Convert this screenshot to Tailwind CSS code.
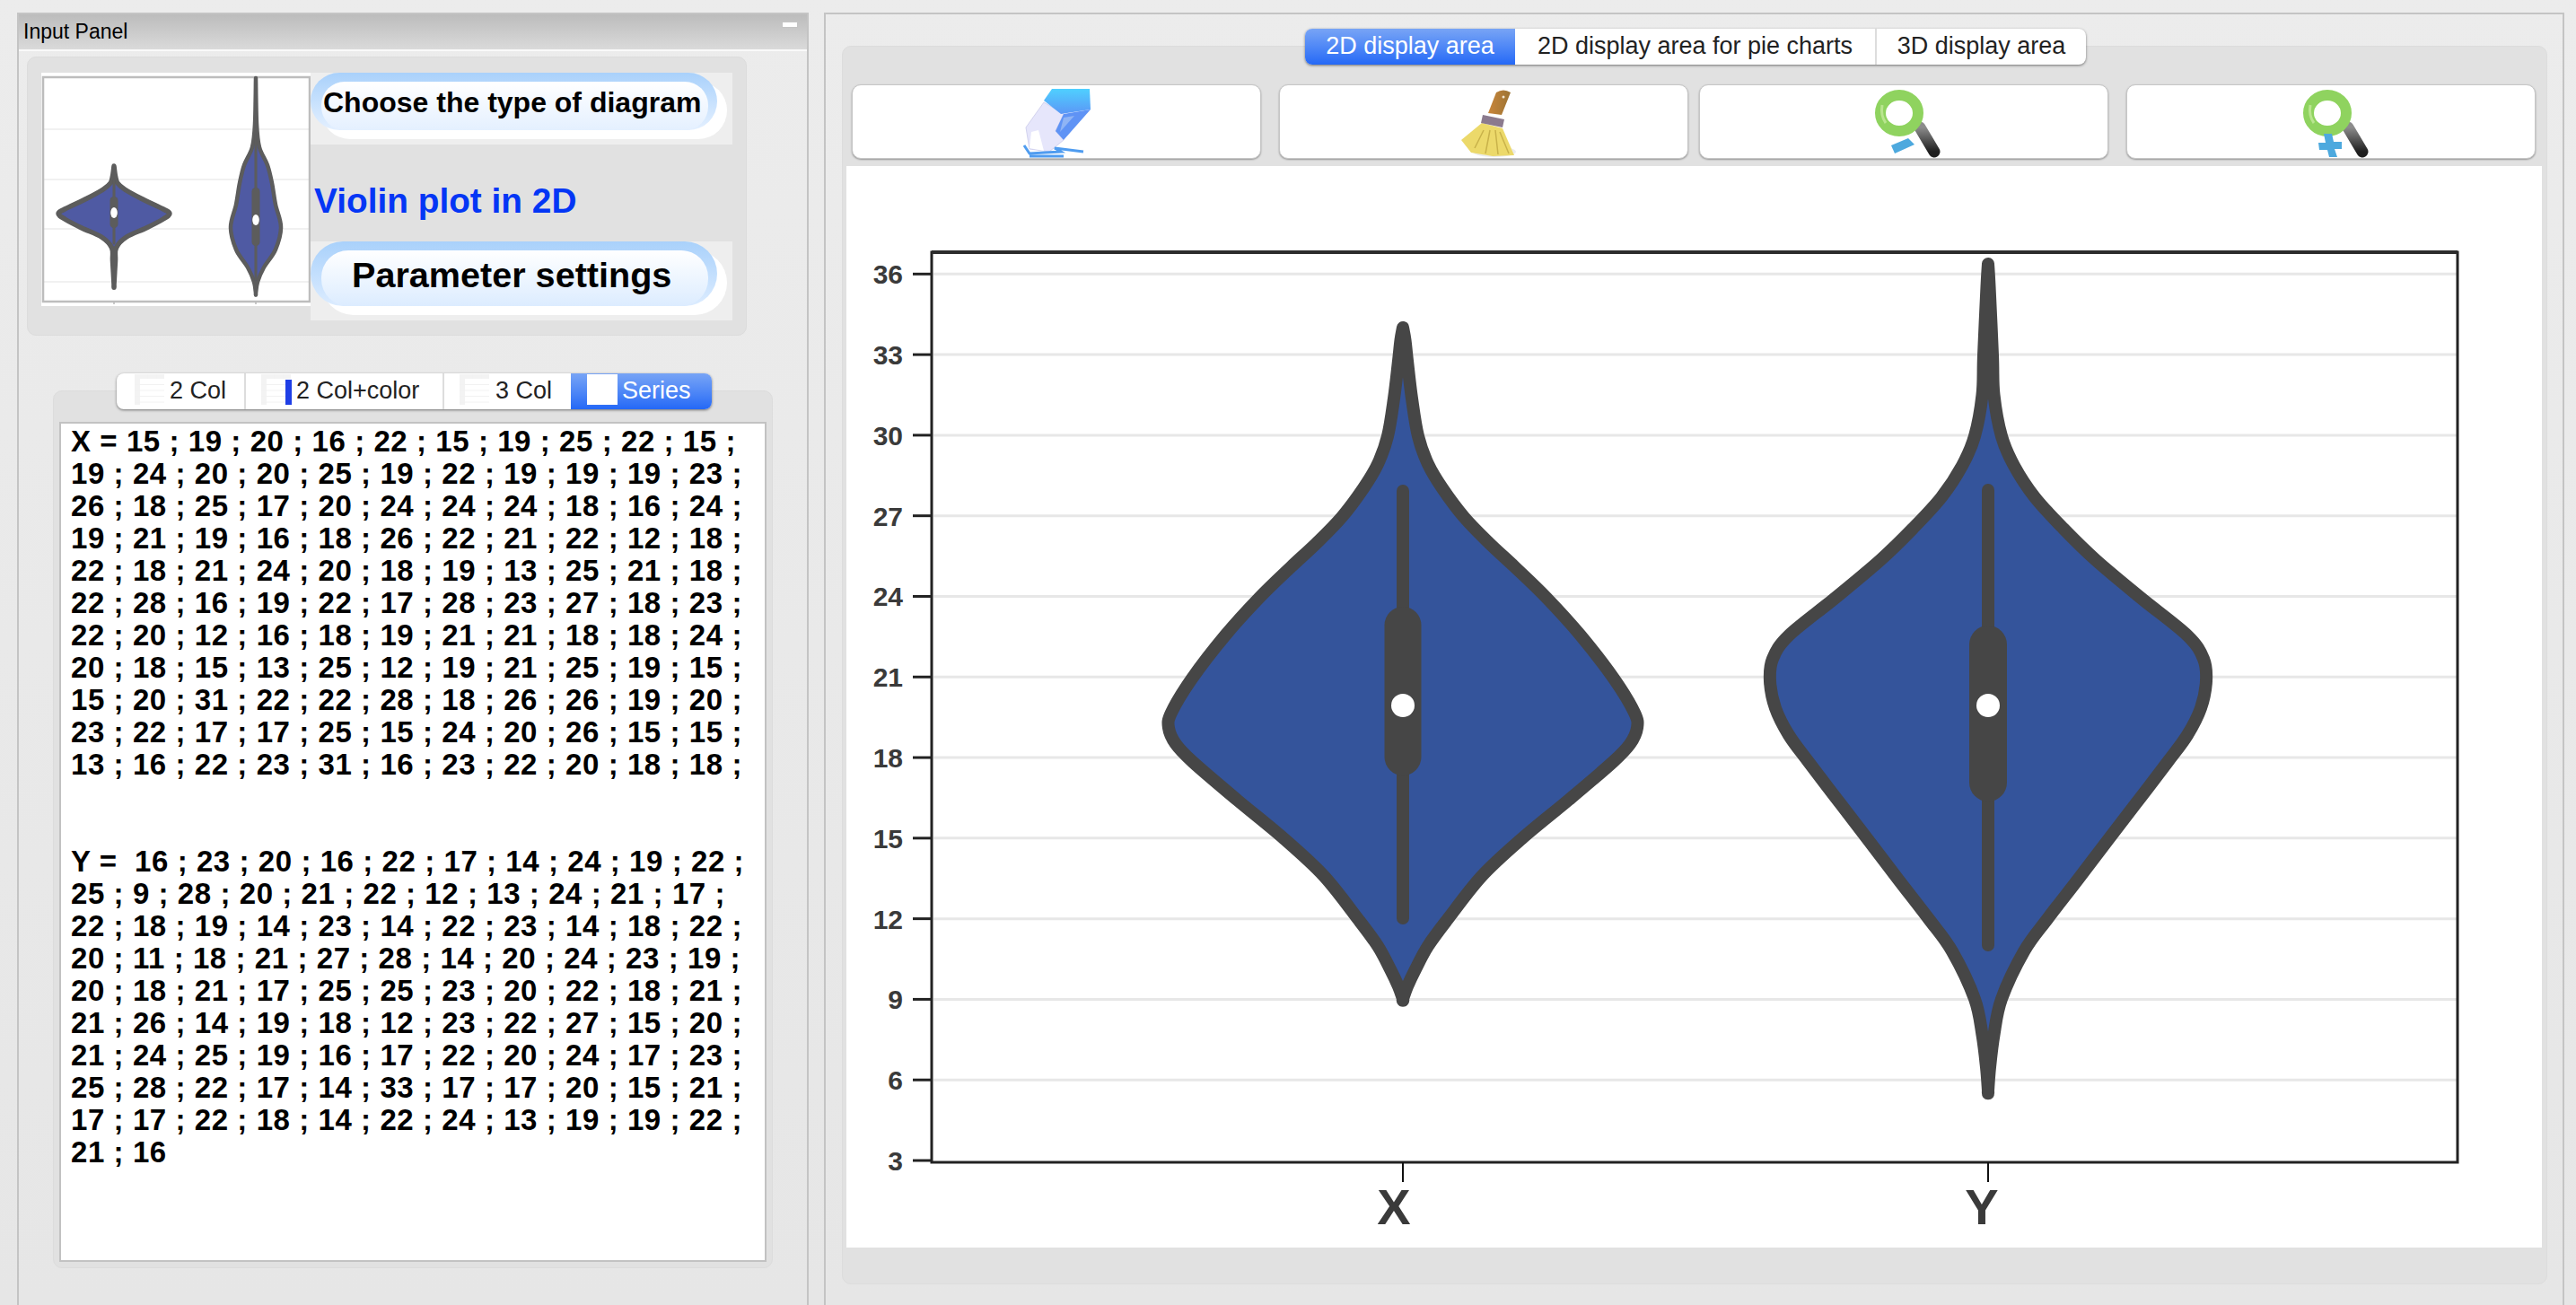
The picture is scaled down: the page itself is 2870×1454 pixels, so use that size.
<!DOCTYPE html>
<html lang="en">
  <head>
    <meta charset="UTF-8" />
    <title>Input Panel</title>
    <script src="https://cdn.jsdelivr.net/npm/@tailwindcss/browser@4"></script>
  </head>
  <body class="m-0 overflow-hidden bg-[#ebebeb] font-['Liberation_Sans',Arial,sans-serif]">
    <div class="flex h-[1454px] w-[2870px] items-start bg-gradient-to-b from-[#ececec] to-[#e6e6e6] pt-[14px]">
      <!-- Input panel -->
      <div class="ml-[19px] h-[1440px] w-[882px] border-x-2 border-t-2 border-[#c4c4c4]">
        <div class="relative h-[39px] bg-gradient-to-b from-[#bcbcbc] to-[#dadada] pl-[5px] text-[23px] leading-[38px] text-black">
          Input Panel
          <div class="absolute top-[8px] right-[10px] h-[7px] w-[18px] border border-[#c4c4c4] bg-white"></div>
        </div>
        <div class="h-[2px] bg-white/70"></div>

        <!-- diagram chooser -->
        <div class="mt-[6px] ml-[9px] flex h-[311px] w-[802px] items-start rounded-[10px] border border-[#dcdcdc] bg-[#e1e1e1] pt-[17px] pl-[15px]">
          <svg class="block bg-white" width="300" height="260" viewBox="46 80 300 260">
            <defs><filter id="soft"><feGaussianBlur stdDeviation="0.6" /></filter></defs>
            <g stroke="#f1f1f1" stroke-width="2">
              <path d="M48 143H345M48 199H345M48 254H345M48 313H345" />
            </g>
            <rect x="48" y="85" width="297" height="250" fill="none" stroke="#bdbdbd" stroke-width="2.5" />
            <path d="M127 335v3M285 335v3" stroke="#b9b9b9" stroke-width="1.5" />
            <g id="thumbViolins" filter="url(#soft)"></g>
          </svg>
          <div class="flex h-[276px] w-[470px] flex-col">
            <div class="relative h-[80px] bg-[#eeeeee]">
              <div class="absolute top-[10px] left-[12px] h-[64px] w-[452px] rounded-full bg-white"></div>
              <div class="absolute top-0 left-0 h-[64px] w-[453px] rounded-[32px] bg-gradient-to-b from-[#a9d1fb] to-[#e4f0ff]"></div>
              <div class="absolute top-[10px] left-[12px] h-[54px] w-[431px] rounded-[26px] bg-gradient-to-b from-white to-[#e4f0ff]"></div>
              <div class="absolute top-[10px] left-[14px] text-[32px] leading-[46px] font-bold whitespace-nowrap text-black">Choose the type of diagram</div>
            </div>
            <div class="flex flex-1 items-center pt-[18px] pl-[4px] text-[38.8px] font-bold text-[#0436f5]">Violin plot in 2D</div>
            <div class="relative h-[88px] bg-[#eeeeee]">
              <div class="absolute top-[10px] left-[12px] h-[72px] w-[452px] rounded-full bg-white"></div>
              <div class="absolute top-0 left-0 h-[72px] w-[453px] rounded-[36px] bg-gradient-to-b from-[#a9d1fb] to-[#dcecff]"></div>
              <div class="absolute top-[10px] left-[12px] h-[62px] w-[431px] rounded-[30px] bg-gradient-to-b from-white to-[#dcecff]"></div>
              <div class="absolute top-[12px] left-[46px] text-[39.6px] leading-[50px] font-bold whitespace-nowrap text-black">Parameter settings</div>
            </div>
          </div>
        </div>

        <!-- data entry -->
        <div class="mt-[61px] ml-[38px] h-[978px] w-[802px] rounded-[10px] border border-[#dcdcdc] bg-[#e1e1e1]">
          <div class="-mt-[20px] ml-[70px] flex h-[40px] w-[663px] overflow-hidden rounded-[8px] bg-white text-[27px] leading-[39px] text-[#222222] shadow-[0_1px_3px_rgba(0,0,0,0.5)]">
            <div class="flex w-[144px] border-r-2 border-[#dddddd] pl-[20px]">
              <svg class="mt-[1px] shrink-0" width="33" height="34"><use href="#sheet" /></svg>
              <span class="ml-[6px]">2 Col</span>
            </div>
            <div class="flex w-[221px] border-r-2 border-[#dddddd] pl-[17px]">
              <svg class="mt-[1px] shrink-0" width="34" height="34"><use href="#sheet" /><rect x="27" y="6" width="7" height="28" fill="#1f3fe6" /></svg>
              <span class="ml-[5px]">2 Col+color</span>
            </div>
            <div class="flex w-[141px] pl-[17px]">
              <svg class="mt-[1px] shrink-0" width="33" height="34"><use href="#sheet" /></svg>
              <span class="ml-[7px]">3 Col</span>
            </div>
            <div class="flex w-[157px] bg-gradient-to-b from-[#78a4f5] to-[#2468f6] pl-[18px] text-white">
              <div class="mt-[1px] h-[34px] w-[34px] bg-white"></div>
              <span class="ml-[5px]">Series</span>
            </div>
          </div>
          <div class="mt-[14px] ml-[6px] h-[936px] w-[788px] border-2 border-[#c2c2c2] bg-white pt-[2px] pl-[11px] text-[33px] leading-[36px] font-bold tracking-[0.57px] whitespace-pre text-black">X = 15 ; 19 ; 20 ; 16 ; 22 ; 15 ; 19 ; 25 ; 22 ; 15 ;
19 ; 24 ; 20 ; 20 ; 25 ; 19 ; 22 ; 19 ; 19 ; 19 ; 23 ;
26 ; 18 ; 25 ; 17 ; 20 ; 24 ; 24 ; 24 ; 18 ; 16 ; 24 ;
19 ; 21 ; 19 ; 16 ; 18 ; 26 ; 22 ; 21 ; 22 ; 12 ; 18 ;
22 ; 18 ; 21 ; 24 ; 20 ; 18 ; 19 ; 13 ; 25 ; 21 ; 18 ;
22 ; 28 ; 16 ; 19 ; 22 ; 17 ; 28 ; 23 ; 27 ; 18 ; 23 ;
22 ; 20 ; 12 ; 16 ; 18 ; 19 ; 21 ; 21 ; 18 ; 18 ; 24 ;
20 ; 18 ; 15 ; 13 ; 25 ; 12 ; 19 ; 21 ; 25 ; 19 ; 15 ;
15 ; 20 ; 31 ; 22 ; 22 ; 28 ; 18 ; 26 ; 26 ; 19 ; 20 ;
23 ; 22 ; 17 ; 17 ; 25 ; 15 ; 24 ; 20 ; 26 ; 15 ; 15 ;
13 ; 16 ; 22 ; 23 ; 31 ; 16 ; 23 ; 22 ; 20 ; 18 ; 18 ;


Y =  16 ; 23 ; 20 ; 16 ; 22 ; 17 ; 14 ; 24 ; 19 ; 22 ;
25 ; 9 ; 28 ; 20 ; 21 ; 22 ; 12 ; 13 ; 24 ; 21 ; 17 ;
22 ; 18 ; 19 ; 14 ; 23 ; 14 ; 22 ; 23 ; 14 ; 18 ; 22 ;
20 ; 11 ; 18 ; 21 ; 27 ; 28 ; 14 ; 20 ; 24 ; 23 ; 19 ;
20 ; 18 ; 21 ; 17 ; 25 ; 25 ; 23 ; 20 ; 22 ; 18 ; 21 ;
21 ; 26 ; 14 ; 19 ; 18 ; 12 ; 23 ; 22 ; 27 ; 15 ; 20 ;
21 ; 24 ; 25 ; 19 ; 16 ; 17 ; 22 ; 20 ; 24 ; 17 ; 23 ;
25 ; 28 ; 22 ; 17 ; 14 ; 33 ; 17 ; 17 ; 20 ; 15 ; 21 ;
17 ; 17 ; 22 ; 18 ; 14 ; 22 ; 24 ; 13 ; 19 ; 19 ; 22 ;
21 ; 16</div>
        </div>
      </div>

      <!-- Display panel -->
      <div class="ml-[17px] h-[1440px] w-[1939px] border-x-2 border-t-2 border-[#c4c4c4] pt-[35px] pl-[18px]">
        <div class="h-[1380px] w-[1900px] rounded-[10px] border border-[#dcdcdc] bg-[#e1e1e1]">
          <div class="-mt-[20px] ml-[515px] flex h-[40px] w-[870px] overflow-hidden rounded-[8px] bg-white text-center text-[27px] leading-[39px] text-[#222222] shadow-[0_1px_3px_rgba(0,0,0,0.5)]">
            <div class="w-[234px] bg-gradient-to-b from-[#78a4f5] to-[#2468f6] text-white">2D display area</div>
            <div class="w-[403px] border-r-2 border-[#dddddd]">2D display area for pie charts</div>
            <div class="w-[233px]">3D display area</div>
          </div>

          <div class="mt-[22px] ml-[10px] flex gap-[20px]">
            <div class="flex h-[83px] w-[456px] justify-center rounded-[10px] border border-[#c6c6c6] bg-white shadow-[0_1px_2px_rgba(0,0,0,0.35)]">
              <svg width="80" height="83" viewBox="0 0 80 83">
                <defs>
                  <linearGradient id="cap" x1="0" y1="0" x2="0" y2="1"><stop offset="0" stop-color="#4fd0ff" /><stop offset="1" stop-color="#5b97f6" /></linearGradient>
                  <linearGradient id="stick" x1="0" y1="0" x2="1" y2="0"><stop offset="0" stop-color="#c9853a" /><stop offset="1" stop-color="#9c7434" /></linearGradient>
                  <linearGradient id="grip" x1="0" y1="0" x2="0" y2="1"><stop offset="0" stop-color="#8c8c8c" /><stop offset="1" stop-color="#1f1f1f" /></linearGradient>
                </defs>
                <path d="M26 19L48 32L39 51L48 61L32 74L10 71L6 47Z" fill="#e6e6fb" stroke="#d2d2ee" />
                <path d="M10 70L26 73L20 50L12 52Z" fill="#ffffff" />
                <path d="M26 17L35 4H77L78 27L45 32Z" fill="url(#cap)" />
                <path d="M48 32L78 27L48 61L39 51Z" fill="#5f93f5" />
                <path d="M48 36L60 34L44 52Z" fill="#8fb4f5" />
                <path d="M4 67L10 76L45 74L38 70L70 74M10 79H48" fill="none" stroke="#4f9cf0" stroke-width="3" />
              </svg>
            </div>
            <div class="flex h-[83px] w-[456px] justify-center rounded-[10px] border border-[#c6c6c6] bg-white shadow-[0_1px_2px_rgba(0,0,0,0.35)]">
              <svg width="80" height="83" viewBox="0 0 80 83">
                <ellipse cx="52" cy="74" rx="24" ry="6" fill="#ececec" />
                <path d="M54 8Q62 3 70 8L60 33L45 31Z" fill="url(#stick)" />
                <circle cx="62" cy="13" r="1.5" fill="#f3e7d0" />
                <path d="M38 42L61 48L74 78L50 79L26 75L15 61Z" fill="#ecd96a" />
                <path d="M40 50L30 70M47 50L42 76M53 50L56 77M58 52L68 76" stroke="#c9b24a" stroke-width="1.5" fill="none" />
                <path d="M39 33L63 38L61 47L37 42Z" fill="#8b7a8e" />
              </svg>
            </div>
            <div class="-ml-[8px] flex h-[83px] w-[456px] justify-center rounded-[10px] border border-[#c6c6c6] bg-white shadow-[0_1px_2px_rgba(0,0,0,0.35)]">
              <svg class="ml-[4px]" width="80" height="83" viewBox="0 0 80 83">
                <path d="M56 47L72 74" stroke="url(#grip)" stroke-width="13" stroke-linecap="round" />
                <ellipse cx="33" cy="31" rx="21" ry="20" fill="none" stroke="#8fd35f" stroke-width="12" />
                <path d="M14 22Q12 34 18 42" fill="none" stroke="#b9e58f" stroke-width="3" />
                <path d="M24 67L43 59L50 66L28 76Z" fill="#4da9de" />
              </svg>
            </div>
            <div class="flex h-[83px] w-[456px] justify-center rounded-[10px] border border-[#c6c6c6] bg-white shadow-[0_1px_2px_rgba(0,0,0,0.35)]">
              <svg class="ml-[6px]" width="80" height="83" viewBox="0 0 80 83">
                <path d="M56 47L72 74" stroke="url(#grip)" stroke-width="13" stroke-linecap="round" />
                <ellipse cx="33" cy="31" rx="21" ry="20" fill="none" stroke="#8fd35f" stroke-width="12" />
                <path d="M14 22Q12 34 18 42" fill="none" stroke="#b9e58f" stroke-width="3" />
                <path d="M29 54H38L40 63H49V71H41L44 80H35L33 72H24L23 64H31Z" fill="#4da9de" />
              </svg>
            </div>
          </div>

          <!-- plot -->
          <svg class="mt-[8px] ml-[4px] block bg-white" width="1889" height="1205" viewBox="943 186 1889 1205" font-family="Liberation Sans, Arial, sans-serif">
            <g id="grid"></g>
            <g id="violins"></g>
            <path d="M1038 282H2738V1296H1038Z" fill="none" stroke="#222222" stroke-width="3" />
            <path d="M1038 282H2738" stroke="#2c2c2c" stroke-width="4" />
            <path d="M1563 1296V1318M2215 1296V1318" stroke="#111111" stroke-width="2" />
            <text x="1553" y="1365" font-size="56" font-weight="700" fill="#3a3a3a" text-anchor="middle">X</text>
            <text x="2208" y="1365" font-size="56" font-weight="700" fill="#3a3a3a" text-anchor="middle">Y</text>
          </svg>
        </div>
      </div>
    </div>

    <svg width="0" height="0" class="absolute">
      <defs>
        <g id="sheet">
          <rect width="33" height="34" fill="#ffffff" />
          <rect width="33" height="5" fill="#f3f3f3" />
          <rect width="6" height="34" fill="#f3f3f3" />
          <path d="M0 11.5H33M0 18H33M0 24.5H33M0 31H33M14 0V5M24 0V5" stroke="#f2f2f2" stroke-width="1" />
        </g>
      </defs>
    </svg>

    <script>
      const NS = "http://www.w3.org/2000/svg";

      function el(parent, name, attrs) {
        const node = document.createElementNS(NS, name);
        for (const key in attrs) node.setAttribute(key, attrs[key]);
        parent.appendChild(node);
        return node;
      }

      // catmull-rom through the outline points
      function smooth(pts) {
        let d = "M" + pts[0].join(" ");
        for (let i = 0; i < pts.length - 1; i++) {
          const p0 = pts[Math.max(i - 1, 0)];
          const p1 = pts[i];
          const p2 = pts[i + 1];
          const p3 = pts[Math.min(i + 2, pts.length - 1)];
          d += " C" + (p1[0] + (p2[0] - p0[0]) / 6) + " " + (p1[1] + (p2[1] - p0[1]) / 6) + " " +
            (p2[0] - (p3[0] - p1[0]) / 6) + " " + (p2[1] - (p3[1] - p1[1]) / 6) + " " + p2[0] + " " + p2[1];
        }
        return d + "Z";
      }

      function drawViolin(parent, v) {
        const right = v.rows.map((r) => [v.cx + r[1], r[0]]);
        const left = v.rows.slice().reverse().map((r) => [v.cx - r[1], r[0]]);
        el(parent, "path", {
          d: smooth(right.concat(left)),
          fill: v.fill,
          stroke: v.stroke,
          "stroke-width": v.line,
          "stroke-linejoin": "round",
        });
        el(parent, "line", { x1: v.cx, x2: v.cx, y1: v.whisker[0], y2: v.whisker[1], stroke: v.stroke, "stroke-width": v.whiskerW, "stroke-linecap": "round" });
        el(parent, "rect", { x: v.cx - v.boxW / 2, y: v.box[0], width: v.boxW, height: v.box[1] - v.box[0], rx: v.boxW / 2, fill: v.stroke });
        el(parent, "ellipse", { cx: v.cx, cy: v.dot, rx: v.dotR[0], ry: v.dotR[1], fill: "#ffffff" });
      }

      // y axis: 3 at 1294, 36 at 306
      const grid = document.getElementById("grid");
      for (let value = 3; value <= 36; value += 3) {
        const y = 1294 - (value - 3) * 29.93;
        if (value > 3) el(grid, "line", { x1: 1040, x2: 2737, y1: y, y2: y, stroke: "#e7e7e7", "stroke-width": 3 });
        el(grid, "line", { x1: 1017, x2: 1038, y1: y, y2: y, stroke: "#222222", "stroke-width": 3 });
        const label = el(grid, "text", { x: 1006, y: y + 11, "font-size": 30, "font-weight": 700, fill: "#3a3a3a", "text-anchor": "end" });
        label.textContent = value;
      }

      const violins = document.getElementById("violins");
      drawViolin(violins, {
        cx: 1563, fill: "#34549b", stroke: "#464646", line: 14,
        rows: [[366, 0], [380, 2.5], [403, 5], [445, 10], [487, 17], [518, 28], [545, 44], [577, 68], [606, 96], [633, 125], [667, 160], [709, 198], [757, 235], [795, 258], [812, 261], [830, 253], [850, 234], [892, 185], [935, 133], [977, 88], [1025, 50], [1055, 28], [1081, 14], [1100, 5], [1114, 0]],
        whisker: [548, 1024], whiskerW: 14, box: [677, 865], boxW: 41, dot: 787, dotR: [13, 13],
      });
      drawViolin(violins, {
        cx: 2215, fill: "#34549b", stroke: "#464646", line: 14,
        rows: [[295, 0], [320, 1.5], [397, 5], [441, 6.5], [487, 15], [520, 29], [555, 52], [590, 84], [625, 120], [667, 170], [709, 222], [735, 240], [760, 243], [790, 237], [820, 222], [850, 200], [892, 168], [935, 135], [981, 100], [1025, 66], [1061, 40], [1114, 15], [1154, 6.5], [1190, 2], [1216, 0]],
        whisker: [547, 1054], whiskerW: 14, box: [698, 894], boxW: 42, dot: 787, dotR: [13, 13],
      });

      const thumb = document.getElementById("thumbViolins");
      drawViolin(thumb, {
        cx: 127, fill: "#4f5aa3", stroke: "#5b5b5b", line: 5.5,
        rows: [[184, 0], [195, 1.5], [203, 4], [210, 12], [220, 30], [232, 55], [237, 62], [243, 55], [253, 36], [263, 14], [275, 2.5], [290, 1.5], [316, 0]],
        whisker: [200, 270], whiskerW: 3, box: [218, 253], boxW: 9, dot: 236, dotR: [3.8, 6],
      });
      drawViolin(thumb, {
        cx: 285, fill: "#4f5aa3", stroke: "#5b5b5b", line: 4.5,
        rows: [[86, 0], [137, 1], [163, 4], [183, 13], [203, 18], [227, 22], [252, 28], [277, 22], [297, 9], [313, 2], [326, 0]],
        whisker: [150, 310], whiskerW: 3, box: [208, 273], boxW: 9, dot: 244, dotR: [3.8, 6],
      });
    </script>
  </body>
</html>
